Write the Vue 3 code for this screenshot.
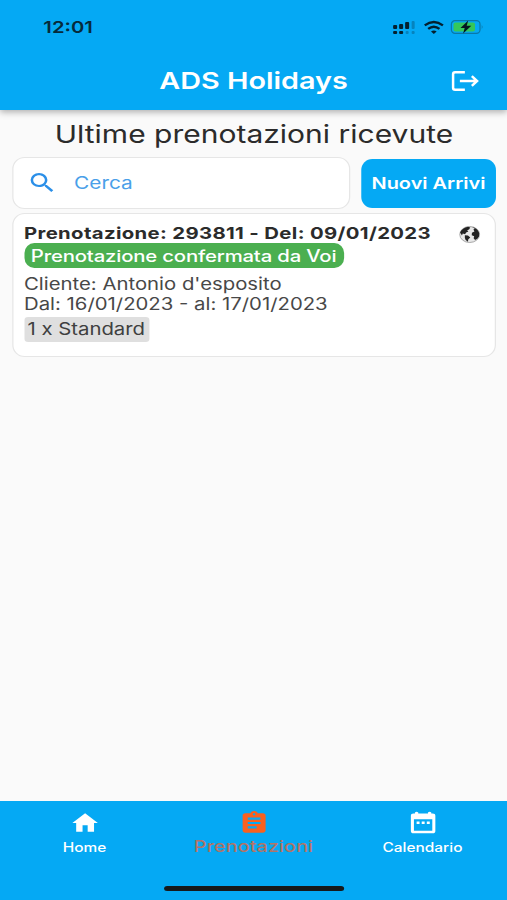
<template>
  <div class="screen">
    <header class="header">
      <div class="status-bar">
        <span class="clock">12:01</span>
        <div class="status-icons">
          <svg class="signal" viewBox="0 0 22 13" preserveAspectRatio="none">
            <rect x="0" y="4" width="4" height="4" rx="1" />
            <rect x="6" y="3" width="4" height="5" rx="1" />
            <rect x="12" y="1" width="4" height="7" rx="1" />
            <rect class="dim" x="18.5" y="0" width="3" height="8" rx="1" />
            <rect x="0" y="10" width="4" height="3" rx="1" />
            <rect x="6" y="10" width="4" height="3" rx="1" />
            <rect class="dim" x="12.5" y="10" width="3" height="3" rx="1" />
            <rect class="dim" x="18.5" y="10" width="3" height="3" rx="1" />
          </svg>
          <svg class="wifi" viewBox="0 0 20 13" preserveAspectRatio="none">
            <path d="M1 4.4Q10-2.4 19 4.4" />
            <path d="M4.4 7.9Q10 3.4 15.6 7.9" />
            <path class="fill" d="M7.2 10.6Q10 8.2 12.8 10.6L10 13Z" />
          </svg>
          <svg class="battery" viewBox="0 0 33 14" preserveAspectRatio="none">
            <rect class="shell" x="0.7" y="0.7" width="28.6" height="12.6" rx="3.6" />
            <rect class="charge" x="2.8" y="2.4" width="21.5" height="9.2" rx="2" />
            <path class="tip" d="M31 4.8Q32.8 7 31 9.2Z" />
            <path class="bolt" d="M17.5 0.5L9.8 8H14L12.4 13.6L20.6 5.8H16Z" />
          </svg>
        </div>
      </div>
      <div class="app-bar">
        <h1>ADS Holidays</h1>
        <button class="logout" aria-label="Esci">
          <svg viewBox="0 0 27 20" preserveAspectRatio="none">
            <path d="M13 1.2H3.2Q1.2 1.2 1.2 3.2V16.8Q1.2 18.8 3.2 18.8H13" />
            <path d="M8 10H25M20 5.2L25.2 10L20 14.8" />
          </svg>
        </button>
      </div>
    </header>

    <main class="content">
      <h2>Ultime prenotazioni ricevute</h2>

      <div class="toolbar">
        <label class="search">
          <svg viewBox="3 3 17.5 17.5" preserveAspectRatio="none">
            <path d="M15.5 14h-.79l-.28-.27A6.47 6.47 0 0 0 16 9.5 6.5 6.5 0 1 0 9.5 16c1.61 0 3.09-.59 4.23-1.57l.27.28v.79l5 4.99L20.49 19l-4.99-5zm-6 0C7.01 14 5 11.99 5 9.5S7.01 5 9.5 5 14 7.01 14 9.5 11.99 14 9.5 14z" />
          </svg>
          <input v-model="search" type="text" placeholder="Cerca" />
        </label>
        <button class="arrivals">Nuovi Arrivi</button>
      </div>

      <article v-for="booking in filteredBookings" :key="booking.id" class="booking">
        <div class="booking-head">
          <strong>Prenotazione: {{ booking.id }} - Del: {{ booking.date }}</strong>
          <svg class="globe" viewBox="0 0 20 17" preserveAspectRatio="none">
            <ellipse class="sea" cx="10" cy="8.5" rx="9.5" ry="8" />
            <path d="M.8 6.5Q3 1.6 8.4.7L10.6 1.6L9.4 3.4L7.6 4.2L8.8 5.4L6.6 6.6L5.6 8.2L3.4 7.4L2.6 9.4Z" />
            <path d="M5.4 9.2L8.4 9.6L10.6 11.4L8.6 13.4L8.4 15.8Q5.6 14.6 5.4 12Z" />
            <path d="M12.2 .9Q17.6 2 19.2 7L19 10.6L17.4 12.8L15.2 14L13.8 12.2L14.4 10.2L12 9.2L12.2 6.8L14.6 5.4L13.6 3.6L15 2.8Z" />
          </svg>
        </div>
        <span class="status">{{ booking.status }}</span>
        <p class="client">Cliente: {{ booking.client }}</p>
        <p class="dates">Dal: {{ booking.from }} - al: {{ booking.to }}</p>
        <span class="room">{{ booking.room }}</span>
      </article>
    </main>

    <nav class="tabs">
      <button
        v-for="tab in tabs"
        :key="tab.name"
        class="tab"
        :class="{ active: tab.name === activeTab }"
        @click="activeTab = tab.name"
      >
        <svg viewBox="0 0 24 24" preserveAspectRatio="none">
          <path :d="tab.icon" />
        </svg>
        <span>{{ tab.name }}</span>
      </button>
      <div class="home-indicator"></div>
    </nav>
  </div>
</template>

<script setup>
import { ref, computed } from 'vue'

const search = ref('')
const activeTab = ref('Prenotazioni')

const bookings = ref([
  {
    id: '293811',
    date: '09/01/2023',
    status: 'Prenotazione confermata da Voi',
    client: "Antonio d'esposito",
    from: '16/01/2023',
    to: '17/01/2023',
    room: '1 x Standard'
  }
])

const filteredBookings = computed(() => {
  const term = search.value.toLowerCase()
  return bookings.value.filter(b => `${b.id} ${b.client}`.toLowerCase().includes(term))
})

const tabs = [
  { name: 'Home', icon: 'M10 20v-6h4v6h5v-8h3L12 3 2 12h3v8z' },
  {
    name: 'Prenotazioni',
    icon: 'M19 3h-4.18C14.4 1.84 13.3 1 12 1s-2.4.84-2.82 2H5c-1.1 0-2 .9-2 2v14c0 1.1.9 2 2 2h14c1.1 0 2-.9 2-2V5c0-1.1-.9-2-2-2zm-7 0c.55 0 1 .45 1 1s-.45 1-1 1-1-.45-1-1 .45-1 1-1zm2 14H7v-2h7v2zm3-4H7v-2h10v2zm0-4H7V7h10v2z'
  },
  {
    name: 'Calendario',
    icon: 'M9.2 10.6H6.9v2.3h2.3zM13.2 10.6h-2.3v2.3h2.3zM17.2 10.6h-2.3v2.3h2.3zM19.5 3.2H18.4V2.4Q17.1.9 15.8 2.4V3.2H8.2V2.4Q6.9.9 5.6 2.4V3.2H4.5Q2.4 3.2 2.4 5.3V19.4Q2.4 21.5 4.5 21.5H19.5Q21.6 21.5 21.6 19.4V5.3Q21.6 3.2 19.5 3.2zM19.2 19.2H4.8V8.5H19.2z'
  }
]
</script>

<style>
body {
  margin: 0;
  overflow: hidden;
  background: #fafafa;
}
</style>

<style scoped>
.screen {
  display: flex;
  flex-direction: column;
  width: 414px;
  height: 900px;
  transform: scaleX(1.224638);
  transform-origin: 0 0;
  background: #fafafa;
  color: #2b2b2b;
  font-family: Inter, "Liberation Sans", sans-serif;
}

* {
  box-sizing: border-box;
}

h1,
h2,
p {
  margin: 0;
  white-space: nowrap;
}

button {
  padding: 0;
  border: 0;
  background: none;
  color: inherit;
  font-family: inherit;
}

svg {
  display: block;
  flex: none;
  overflow: visible;
}

/* Header */
.header {
  flex: none;
  height: 110px;
  background: #05a9f4;
  box-shadow: 0 2px 6px rgba(0, 0, 0, 0.32);
}

.status-bar {
  display: flex;
  justify-content: space-between;
  align-items: center;
  height: 54px;
  padding: 0 19px 0 35.4px;
}

.clock {
  color: #062a3b;
  font-size: 16.5px;
  font-weight: 600;
}

.status-icons {
  display: flex;
  align-items: center;
}

.signal {
  width: 18px;
  height: 13px;
  margin-right: 6.5px;
  fill: #04202e;
}

.signal .dim {
  fill: #0683bd;
}

.wifi {
  width: 16.5px;
  height: 13px;
  margin-right: 6px;
  fill: none;
  stroke: #04202e;
  stroke-width: 2.4;
}

.wifi .fill {
  fill: #04202e;
  stroke: none;
}

.battery {
  width: 27px;
  height: 14px;
}

.shell {
  fill: none;
  stroke: #0a78a8;
  stroke-width: 1.2;
}

.charge {
  fill: #35c75a;
}

.tip {
  fill: #0a78a8;
}

.bolt {
  fill: #04161f;
}

.app-bar {
  display: grid;
  grid-template-columns: 60px 1fr 60px;
  align-items: center;
  height: 54px;
}

.app-bar h1 {
  grid-column: 2;
  padding-bottom: 2px;
  color: #fff;
  font-size: 23.5px;
  font-weight: 600;
  text-align: center;
}

.logout {
  padding-left: 15px;
}

.logout svg {
  width: 22px;
  height: 20px;
  fill: none;
  stroke: #fff;
  stroke-width: 2.5;
}

/* Content */
.content {
  flex: 1;
  padding: 6px 9px 0 9.8px;
}

.content h2 {
  height: 41px;
  font-size: 24.5px;
  font-weight: 400;
  line-height: 36px;
  text-align: center;
}

.toolbar {
  display: flex;
  align-items: center;
  gap: 9px;
  height: 52px;
}

.search {
  display: flex;
  align-items: center;
  width: 276px;
  height: 52px;
  padding: 0 0 1px 14.6px;
  border: 1px solid #e6e6e6;
  border-radius: 10px / 12px;
  background: #fff;
}

.search svg {
  width: 18.5px;
  height: 19px;
  fill: #2b8fe8;
}

.search input {
  width: 200px;
  margin-left: 16.6px;
  padding: 0;
  border: 0;
  outline: 0;
  background: none;
  font-family: inherit;
  font-size: 17px;
}

.search input::placeholder {
  color: #4a9fe9;
  opacity: 1;
}

.arrivals {
  flex: 1;
  height: 49px;
  border-radius: 9px / 11px;
  background: #05a9f4;
  color: #fff;
  font-size: 16.3px;
  font-weight: 600;
  white-space: nowrap;
}

.booking {
  height: 144px;
  margin-top: 4px;
  padding: 8px 12px 0 8.8px;
  border: 1px solid #e6e6e6;
  border-radius: 10px / 12px;
  background: #fff;
  font-size: 16.6px;
  white-space: nowrap;
}

.booking-head {
  display: flex;
  justify-content: space-between;
  align-items: center;
  height: 21px;
}

.booking-head strong {
  font-weight: 700;
  letter-spacing: 0.28px;
}

.globe {
  width: 17px;
  height: 17px;
  margin-top: 3px;
  fill: #222;
}

.globe .sea {
  fill: #e8e8e8;
  stroke: #8a8a8a;
  stroke-width: 0.7;
}

.status {
  display: block;
  width: 261px;
  height: 25px;
  padding-left: 5.6px;
  border-radius: 8px / 10px;
  background: #4baf50;
  color: #fff;
  font-weight: 500;
  letter-spacing: -0.15px;
  line-height: 26px;
}

.client,
.dates {
  height: 20px;
  color: #484848;
  line-height: 20px;
}

.client {
  margin-top: 6px;
}

.room {
  display: block;
  width: 102px;
  height: 25px;
  margin-top: 3px;
  padding-left: 2.8px;
  border-radius: 3px;
  background: #dfdfdf;
  color: #404040;
  line-height: 24px;
}

/* Bottom navigation */
.tabs {
  display: grid;
  grid-template-columns: repeat(3, 1fr);
  grid-template-rows: 1fr 14px;
  flex: none;
  height: 99px;
  background: #05a9f4;
}

.tab {
  display: flex;
  flex-direction: column;
  align-items: center;
  padding-top: 9px;
  color: #fff;
  font-size: 12.6px;
  font-weight: 500;
}

.tab svg {
  width: 25px;
  height: 26px;
  fill: currentColor;
}

.tab span {
  margin-top: 3px;
  line-height: 18px;
}

.tab.active {
  color: #f9611f;
  font-size: 16.3px;
}

.tab.active span {
  margin-top: 1px;
  color: #b17468;
}

.home-indicator {
  grid-column: 1 / -1;
  justify-self: center;
  width: 147px;
  height: 5px;
  border-radius: 3px;
  background: #16191b;
}
</style>
